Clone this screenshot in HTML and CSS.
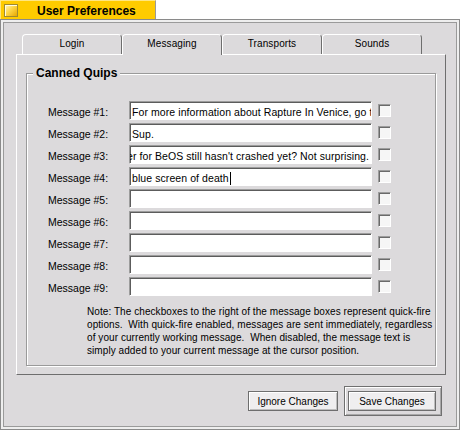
FILE: index.html
```html
<!DOCTYPE html>
<html>
<head>
<meta charset="utf-8">
<title>User Preferences</title>
<link rel="stylesheet" href="styles.css">
</head>
<body>
<div class="titletab"><span class="closebox"></span><span class="title">User Preferences</span></div>
<div class="window">
  <div class="frame">
    <div class="tabbar">
      <div class="tab">Login</div>
      <div class="tab active">Messaging</div>
      <div class="tab">Transports</div>
      <div class="tab">Sounds</div>
    </div>
    <div class="panel">
      <div class="group">
        <div class="group-label">Canned Quips</div>
        <div class="rows">
          <div class="row"><div class="label">Message #1:</div><div class="field">For more information about Rapture In Venice, go to the website</div><div class="check"></div></div>
          <div class="row"><div class="label">Message #2:</div><div class="field">Sup.</div><div class="check"></div></div>
          <div class="row"><div class="label">Message #3:</div><div class="field end"><span>Messenger for BeOS still hasn't crashed yet? Not surprising.</span></div><div class="check"></div></div>
          <div class="row"><div class="label">Message #4:</div><div class="field">blue screen of death<span class="caret"></span></div><div class="check"></div></div>
          <div class="row"><div class="label">Message #5:</div><div class="field"></div><div class="check"></div></div>
          <div class="row"><div class="label">Message #6:</div><div class="field"></div><div class="check"></div></div>
          <div class="row"><div class="label">Message #7:</div><div class="field"></div><div class="check"></div></div>
          <div class="row"><div class="label">Message #8:</div><div class="field"></div><div class="check"></div></div>
          <div class="row"><div class="label">Message #9:</div><div class="field"></div><div class="check"></div></div>
        </div>
        <p class="note">Note: The checkboxes to the right of the message boxes represent quick-fire
options.  With quick-fire enabled, messages are sent immediately, regardless
of your currently working message.  When disabled, the message text is
simply added to your current message at the cursor position.</p>
      </div>
    </div>
    <div class="buttons">
      <div class="btn ignore">Ignore Changes</div>
      <div class="default-ring"><div class="btn save">Save Changes</div></div>
    </div>
  </div>
</div>
</body>
</html>
```

FILE: styles.css
```css
* { box-sizing: border-box; }

body {
  margin: 0;
  width: 460px;
  height: 430px;
  overflow: hidden;
  background: #ffffff;
  font-family: "Liberation Sans", Arial, sans-serif;
  color: #000;
}

.titletab {
  width: 156px;
  height: 19px;
  background: #ffcb00;
  border: 1px solid #ffe680;
  border-bottom: 0;
  border-right-color: #9a9a9a;
  display: flex;
  align-items: flex-start;
  padding: 3px 0 0 3px;
}

.closebox {
  width: 14px;
  height: 13px;
  border: 1px solid #a08a30;
  background: linear-gradient(135deg, #fff7c0 0%, #ffd84a 45%, #e8a800 100%);
  box-shadow: inset 1px 1px #fffbe0;
}

.title {
  margin-left: 19px;
  font-size: 12px;
  font-weight: bold;
  line-height: 14px;
  white-space: nowrap;
}

.window {
  height: 411px;
  border: 1px solid #8a8a8a;
  background: #eeeeee;
  padding: 2px;
}

.frame {
  height: 100%;
  border: 1px solid #9a9a9a;
  background: #dcdadc;
  padding: 11px 0 0 12px;
  display: flex;
  flex-direction: column;
}

.tabbar {
  display: flex;
  align-items: flex-start;
  padding-left: 6px;
  height: 21px;
  margin-bottom: -1px;
  position: relative;
  z-index: 1;
}

.tab {
  width: 100px;
  height: 20px;
  border-top: 1px solid #ffffff;
  border-left: 1px solid #ffffff;
  border-right: 1px solid #6e6e6e;
  border-radius: 4px 4px 0 0;
  font-size: 10px;
  line-height: 18px;
  letter-spacing: 0.1px;
  text-align: center;
}

.tab.active {
  height: 21px;
  background: #dcdadc;
}

.panel {
  width: 430px;
  height: 321px;
  border: 1px solid;
  border-color: #ffffff #6e6e6e #6e6e6e #ffffff;
  padding: 18px 9px 0 9px;
}

.group {
  position: relative;
  height: 293px;
  border: 1px solid #9a9a9a;
  box-shadow: inset 1px 1px #ffffff, 1px 1px #ffffff;
  padding: 27px 0 0 21px;
}

.group-label {
  position: absolute;
  top: -8px;
  left: 6px;
  padding: 0 3px;
  background: #dcdadc;
  font-size: 12px;
  font-weight: bold;
  line-height: 14px;
}

.rows {
  display: flex;
  flex-direction: column;
  gap: 3px;
}

.row {
  display: flex;
  align-items: flex-start;
  height: 19px;
}

.label {
  width: 81px;
  padding-top: 4px;
  font-size: 10.5px;
  line-height: 14px;
  white-space: nowrap;
}

.field {
  width: 243px;
  height: 19px;
  border: 1px solid;
  border-color: #9c9c9c #ffffff #ffffff #9c9c9c;
  box-shadow: inset 1px 1px #5c5c5c;
  background: #ffffff;
  padding: 3px 0 0 2px;
  font-size: 10.5px;
  line-height: 14px;
  letter-spacing: 0.08px;
  white-space: nowrap;
  overflow: hidden;
}

.field.end {
  display: flex;
  justify-content: flex-end;
  padding-right: 2px;
}

.field.end span { flex-shrink: 0; }

.caret {
  display: inline-block;
  width: 1px;
  height: 13px;
  background: #000;
  vertical-align: -3px;
  margin-left: 1px;
}

.check {
  width: 13px;
  height: 13px;
  margin: 3px 0 0 6px;
  border: 1px solid;
  border-color: #9c9c9c #ffffff #ffffff #9c9c9c;
  box-shadow: inset 1px 1px #6a6a6a;
  background: #f6f6f6;
}

.note {
  margin: 9px 0 0 39px;
  font-size: 10px;
  line-height: 13px;
  letter-spacing: 0.07px;
  white-space: pre;
}

.buttons {
  display: flex;
  justify-content: flex-end;
  align-items: center;
  gap: 6px;
  padding-right: 14px;
  margin-top: 11px;
}

.btn {
  height: 20px;
  border: 1px solid #6e6e6e;
  background: #efeeef;
  box-shadow: inset 1px 1px #ffffff, inset -1px -1px #bdbdbd;
  font-size: 10px;
  line-height: 16px;
  padding-top: 2px;
  text-align: center;
  white-space: nowrap;
}

.btn.ignore { width: 90px; }
.btn.save { width: 88px; }

.default-ring {
  width: 98px;
  height: 30px;
  border: 1px solid #707070;
  box-shadow: inset 1px 1px #ffffff, inset -1px -1px #a8a8a8;
  padding: 4px 5px 5px 3px;
}
```
